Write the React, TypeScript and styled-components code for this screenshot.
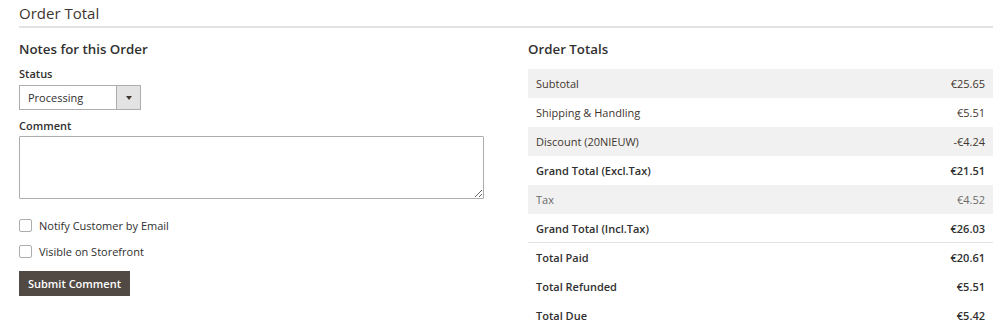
import { createGlobalStyle } from 'styled-components'
import styled from 'styled-components'

type TotalRow = {
  label: string
  value: string
  strong?: boolean
  muted?: boolean
  striped?: boolean
  divider?: boolean
}

const totals: TotalRow[] = [
  { label: 'Subtotal', value: '€25.65', striped: true },
  { label: 'Shipping & Handling', value: '€5.51' },
  { label: 'Discount (20NIEUW)', value: '-€4.24', striped: true },
  { label: 'Grand Total (Excl.Tax)', value: '€21.51', strong: true },
  { label: 'Tax', value: '€4.52', striped: true, muted: true },
  { label: 'Grand Total (Incl.Tax)', value: '€26.03', strong: true, divider: true },
  { label: 'Total Paid', value: '€20.61', strong: true },
  { label: 'Total Refunded', value: '€5.51', strong: true },
  { label: 'Total Due', value: '€5.42', strong: true }
]

const GlobalStyle = createGlobalStyle`
  html, body {
    margin: 0;
    padding: 0;
    background: #ffffff;
  }
  body {
    font-family: 'Open Sans', 'Liberation Sans', sans-serif;
    font-size: 11px;
    color: #303030;
  }
  * {
    box-sizing: border-box;
  }
`

const Section = styled.section`
  width: 974px;
  margin-left: 19px;
`

const SectionTitle = styled.div`
  padding: 3px 0 3px;
  font-size: 15px;
  line-height: 20px;
  font-weight: 400;
  color: #41362f;
  border-bottom: 2px solid #e3e3e3;
`

const Columns = styled.div`
  display: grid;
  grid-template-columns: 465px 465px;
  column-gap: 44px;
`

const Column = styled.div`
  display: flex;
  flex-direction: column;
`

const ColumnTitle = styled.h4`
  margin: 12px 0 0;
  font-size: 13.3px;
  line-height: 18px;
  font-weight: 600;
  color: #303030;
`

const FieldLabel = styled.label<{ $top: number }>`
  display: block;
  margin-top: ${({ $top }) => $top}px;
  font-size: 11px;
  line-height: 15px;
  font-weight: 600;
  color: #303030;
`

const SelectBox = styled.div`
  margin-top: 4px;
  width: 122px;
  height: 25px;
  display: flex;
  border: 1px solid #adadad;
  background: #ffffff;
`

const SelectValue = styled.span`
  flex: 1;
  display: flex;
  align-items: center;
  padding-left: 8px;
  font-size: 11px;
  color: #303030;
`

const SelectArrow = styled.span`
  width: 24px;
  display: flex;
  align-items: center;
  justify-content: center;
  background: #e3e3e3;
  border-left: 1px solid #adadad;

  &::after {
    content: '';
    width: 0;
    height: 0;
    border-left: 3px solid transparent;
    border-right: 3px solid transparent;
    border-top: 4px solid #41362f;
  }
`

const CommentArea = styled.textarea`
  margin-top: 3px;
  width: 465px;
  height: 63px;
  border: 1px solid #adadad;
  border-radius: 1px;
  padding: 6px 8px;
  font-family: inherit;
  font-size: 11px;
  outline: none;
  display: block;
`

const CheckList = styled.div`
  margin-top: 20px;
  display: flex;
  flex-direction: column;
  gap: 13px;
`

const CheckRow = styled.label`
  display: flex;
  align-items: center;
  gap: 7px;
  height: 13px;
  font-size: 11px;
  color: #303030;
`

const CheckBox = styled.span`
  width: 13px;
  height: 13px;
  border: 1px solid #adadad;
  border-radius: 2px;
  background: #ffffff;
`

const SubmitButton = styled.button`
  margin-top: 13px;
  align-self: flex-start;
  width: 111px;
  height: 25px;
  padding: 0;
  border: 1px solid #514943;
  background: #514943;
  color: #ffffff;
  font-family: inherit;
  font-size: 11px;
  font-weight: 600;
  cursor: pointer;
`

const TotalsTable = styled.div`
  margin-top: 11px;
  display: flex;
  flex-direction: column;
`

const TotalLine = styled.div<{ $striped?: boolean; $strong?: boolean; $muted?: boolean; $divider?: boolean }>`
  height: 29px;
  display: flex;
  align-items: center;
  justify-content: space-between;
  padding: 0 8px;
  background: ${({ $striped }) => ($striped ? '#f1f1f1' : '#ffffff')};
  font-weight: ${({ $strong }) => ($strong ? 600 : 400)};
  color: ${({ $muted, $strong }) => ($muted ? '#6a6a6a' : $strong ? '#303030' : '#41362f')};
  border-bottom: ${({ $divider }) => ($divider ? '1px solid #e3e3e3' : 'none')};
`

export default function App() {
  return (
    <>
      <GlobalStyle />
      <Section>
        <SectionTitle>Order Total</SectionTitle>
        <Columns>
          <Column>
            <ColumnTitle>Notes for this Order</ColumnTitle>
            <FieldLabel $top={8}>Status</FieldLabel>
            <SelectBox>
              <SelectValue>Processing</SelectValue>
              <SelectArrow />
            </SelectBox>
            <FieldLabel $top={8}>Comment</FieldLabel>
            <CommentArea />
            <CheckList>
              <CheckRow>
                <CheckBox />
                Notify Customer by Email
              </CheckRow>
              <CheckRow>
                <CheckBox />
                Visible on Storefront
              </CheckRow>
            </CheckList>
            <SubmitButton>Submit Comment</SubmitButton>
          </Column>
          <Column>
            <ColumnTitle>Order Totals</ColumnTitle>
            <TotalsTable>
              {totals.map((row) => (
                <TotalLine
                  key={row.label}
                  $striped={row.striped}
                  $strong={row.strong}
                  $muted={row.muted}
                  $divider={row.divider}
                >
                  <span>{row.label}</span>
                  <span>{row.value}</span>
                </TotalLine>
              ))}
            </TotalsTable>
          </Column>
        </Columns>
      </Section>
    </>
  )
}
